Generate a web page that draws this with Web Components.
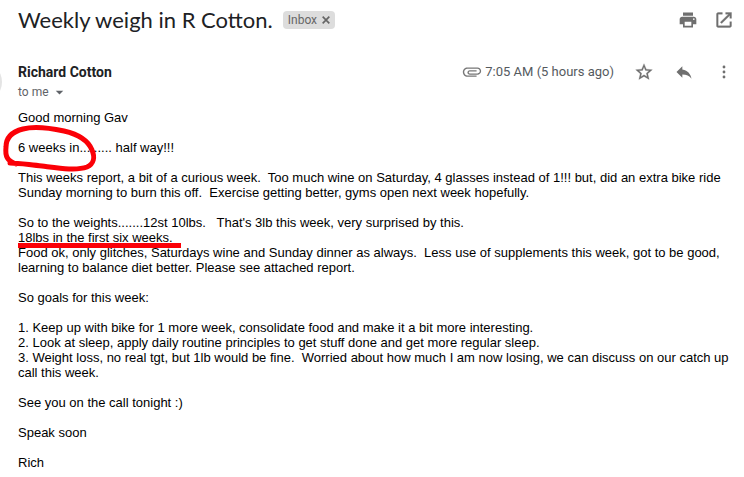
<!DOCTYPE html>
<html lang="en">
<head>
<meta charset="utf-8">
<meta name="viewport" content="width=device-width, initial-scale=1">
<title>Weekly weigh in R Cotton.</title>
<style>
  html { background: #fff; }
  body { margin: 0; overflow-x: hidden; }
</style>
</head>
<body>
<mail-view></mail-view>

<script>
const ICONS = {
  print: '<path d="M19 8H5c-1.66 0-3 1.34-3 3v6h4v4h12v-4h4v-6c0-1.66-1.34-3-3-3zm-3 11H8v-5h8v5zm3-7c-.55 0-1-.45-1-1s.45-1 1-1 1 .45 1 1-.45 1-1 1zm-1-9H6v4h12V3z"/>',
  open: '<path d="M19 19H5V5h5V3H5c-1.11 0-2 .9-2 2v14c0 1.1.89 2 2 2h14c1.1 0 2-.9 2-2v-5h-2v5zM14 3v2h3.400l-9.830 9.630 1.610 1.610L19 6.610V10h2V3h-7z" stroke="currentColor" stroke-width=".4"/>',
  star: '<path d="M22 9.24l-7.19-.62L12 2 9.19 8.63 2 9.24l5.46 4.73L5.82 21 12 17.27 18.18 21l-1.63-7.03L22 9.24zM12 15.4l-3.76 2.27 1-4.28-3.32-2.88 4.38-.38L12 6.1l1.71 4.04 4.38.38-3.32 2.88 1 4.28L12 15.4z" stroke="currentColor" stroke-width=".3"/>',
  reply: '<path d="M10 9V5l-7 7 7 7v-4.100c5 0 8.500 1.600 11 5.100-1-5-4-10-11-11z"/>',
  more: '<circle cx="12" cy="6" r="1.700"/><circle cx="12" cy="12" r="1.700"/><circle cx="12" cy="18" r="1.700"/>',
  clip: '<path d="M2 12C2 9.240 4.240 7 7 7H18c2.210 0 4 1.790 4 4s-1.790 4-4 4H9.500C8.120 15 7 13.880 7 12.500S8.120 10 9.500 10H17v1.500H9.410c-1.200 0-1.200 2 0 2H18c1.400 0 2.500-1.100 2.500-2.500S19.400 8.500 18 8.500H7C5.070 8.500 3.500 10.070 3.500 12S5.070 15.800 7 15.800H17v1.500H7C4.240 17.300 2 14.760 2 12z"/>',
  close: '<path d="M4 4l16 16M20 4L4 20" fill="none" stroke="currentColor" stroke-width="4"/>',
  down: '<path d="M2 7h20L12 17z"/>'
};

class MailIcon extends HTMLElement {
  connectedCallback() {
    this.attachShadow({ mode: 'open' }).innerHTML = `
      <style>
        :host { display: block; width: var(--icon-size, 20px); height: var(--icon-size, 20px); }
        svg { display: block; width: 100%; height: 100%; fill: currentColor; }
      </style>
      <svg viewBox="0 0 24 24" aria-hidden="true">${ICONS[this.getAttribute('name')]}</svg>`;
  }
}
customElements.define('mail-icon', MailIcon);

class IconButton extends HTMLElement {
  connectedCallback() {
    this.attachShadow({ mode: 'open' }).innerHTML = `
      <style>
        :host { display: block; color: #6f6f6f; }
        button { display: block; padding: 0; border: 0; background: none; color: inherit; cursor: pointer; }
      </style>
      <button type="button" aria-label="${this.getAttribute('label')}"><mail-icon name="${this.getAttribute('icon')}"></mail-icon></button>`;
  }
}
customElements.define('icon-button', IconButton);

class LabelChip extends HTMLElement {
  connectedCallback() {
    this.attachShadow({ mode: 'open' }).innerHTML = `
      <style>
        :host { display: flex; align-items: center; gap: 4px; height: 18px; padding: 0 4px 0 5px;
          border-radius: 4px; background: #ddd; color: #666; font: 12px/18px Roboto, sans-serif; }
        button { padding: 0; border: 0; background: none; color: inherit; --icon-size: 10px; }
      </style>
      <slot></slot><button type="button" aria-label="Remove label"><mail-icon name="close"></mail-icon></button>`;
  }
}
customElements.define('label-chip', LabelChip);

class MailSubject extends HTMLElement {
  connectedCallback() {
    this.attachShadow({ mode: 'open' }).innerHTML = `
      <style>
        :host { display: flex; align-items: center; gap: 16px; height: 40px; padding: 0 10px 0 18px; }
        .subject { display: flex; align-items: center; gap: 10px; flex: 1; min-width: 0; }
        h1 { margin: 0; color: #202124; font: 400 22px/28px Lato, sans-serif; white-space: nowrap; }
      </style>
      <div class="subject"><h1><slot></slot></h1><slot name="label"></slot></div>
      <slot name="actions"></slot>`;
  }
}
customElements.define('mail-subject', MailSubject);

class MailSender extends HTMLElement {
  connectedCallback() {
    this.attachShadow({ mode: 'open' }).innerHTML = `
      <style>
        :host { display: grid; grid-template-columns: 18px 1fr auto; padding: 22px 10px 8px 0;
          font: 13px/20px Roboto, sans-serif; color: #555a5e; }
        .avatar { width: 40px; height: 40px; justify-self: end; margin-right: 16px;
          border-radius: 50%; background: #e4e4e4; }
        h2 { margin: 0; font: 700 14px/20px Roboto, sans-serif; color: #202124; }
        .to { display: flex; align-items: center; gap: 6px; padding: 0; border: 0; background: none;
          font: 12px/20px Roboto, sans-serif; color: #5f6368; --icon-size: 9px; }
        .meta { display: flex; align-items: center; height: 20px; gap: 20px; }
        .time { display: flex; align-items: center; gap: 2px; white-space: nowrap; }
        .time mail-icon { --icon-size: 22px; color: #777; }
      </style>
      <div class="avatar"></div>
      <div><h2><slot></slot></h2>
        <button type="button" class="to">to me <mail-icon name="down"></mail-icon></button></div>
      <div class="meta">
        <div class="time"><mail-icon name="clip"></mail-icon><slot name="time"></slot></div>
        <icon-button icon="star" label="Star"></icon-button>
        <icon-button icon="reply" label="Reply"></icon-button>
        <icon-button icon="more" label="More"></icon-button>
      </div>`;
  }
}
customElements.define('mail-sender', MailSender);

/* Inline text with a hand-drawn red mark laid over it. */
class MarkedText extends HTMLElement {
  connectedCallback() {
    const ring = this.getAttribute('kind') === 'ring';
    this.attachShadow({ mode: 'open' }).innerHTML = `
      <style>
        :host { display: inline-block; position: relative; }
        svg { position: absolute; z-index: 1; pointer-events: none; overflow: visible; }
        .ring { left: -18px; top: -15px; width: 100px; height: 50px; }
        .line { position: absolute; z-index: 1; left: 0; right: -8px; top: 13px; height: 5px; background: #fb0007; }
      </style>
      <slot></slot>${ring
        ? `<svg class="ring" viewBox="0 0 100 50" aria-hidden="true">
             <path d="M10 38C20 38 30 40 42 41C58 43 76 46 87 42C94 39 95 32 92 25C88 15 77 9 64 6C50 3 34 1 23 4C11 7 6 14 6 22C5 31 7 36 16 39"
               fill="none" stroke="#fb0007" stroke-width="5" stroke-linecap="round" stroke-linejoin="round"/></svg>`
        : '<span class="line"></span>'}`;
  }
}
customElements.define('marked-text', MarkedText);

class MailBody extends HTMLElement {
  connectedCallback() {
    this.attachShadow({ mode: 'open' }).innerHTML = `
      <style>
        :host { display: flex; flex-direction: column; gap: 15px; padding: 0 12px 7px 18px;
          font: 13px/15px "Liberation Sans", Arial, sans-serif; color: #000; }
        ::slotted(p) { margin: 0; }
      </style>
      <slot></slot>`;
  }
}
customElements.define('mail-body', MailBody);

class MailView extends HTMLElement {
  connectedCallback() {
    this.attachShadow({ mode: 'open' }).innerHTML = `
      <style>:host { display: block; }</style>
      <mail-subject>Weekly weigh in R Cotton.
        <label-chip slot="label">Inbox</label-chip>
        <icon-button slot="actions" icon="print" label="Print"></icon-button>
        <icon-button slot="actions" icon="open" label="Open in new window"></icon-button>
      </mail-subject>
      <mail-sender>Richard Cotton<span slot="time">7:05 AM (5 hours ago)</span></mail-sender>
      <mail-body>
        <p>Good morning Gav</p>
        <p><marked-text kind="ring">6 weeks in</marked-text>......... half way!!!</p>
        <p>This weeks report, a bit of a curious week.&nbsp; Too much wine on Saturday, 4 glasses instead of 1!!! but, did an extra bike ride Sunday morning to burn this off.&nbsp; Exercise getting better, gyms open next week hopefully.</p>
        <p>So to the weights.......12st 10lbs.&nbsp;&nbsp; That's 3lb this week, very surprised by this.<br><marked-text kind="line">18lbs in the first six weeks.</marked-text><br>Food ok, only glitches, Saturdays wine and Sunday dinner as always.&nbsp; Less use of supplements this week, got to be good, learning to balance diet better. Please see attached report.</p>
        <p>So goals for this week:</p>
        <p>1. Keep up with bike for 1 more week, consolidate food and make it a bit more interesting.<br>2. Look at sleep, apply daily routine principles to get stuff done and get more regular sleep.<br>3. Weight loss, no real tgt, but 1lb would be fine.&nbsp; Worried about how much I am now losing, we can discuss on our catch up call this week.</p>
        <p>See you on the call tonight :)</p>
        <p>Speak soon</p>
        <p>Rich</p>
      </mail-body>`;
  }
}
customElements.define('mail-view', MailView);
</script>
</body>
</html>
